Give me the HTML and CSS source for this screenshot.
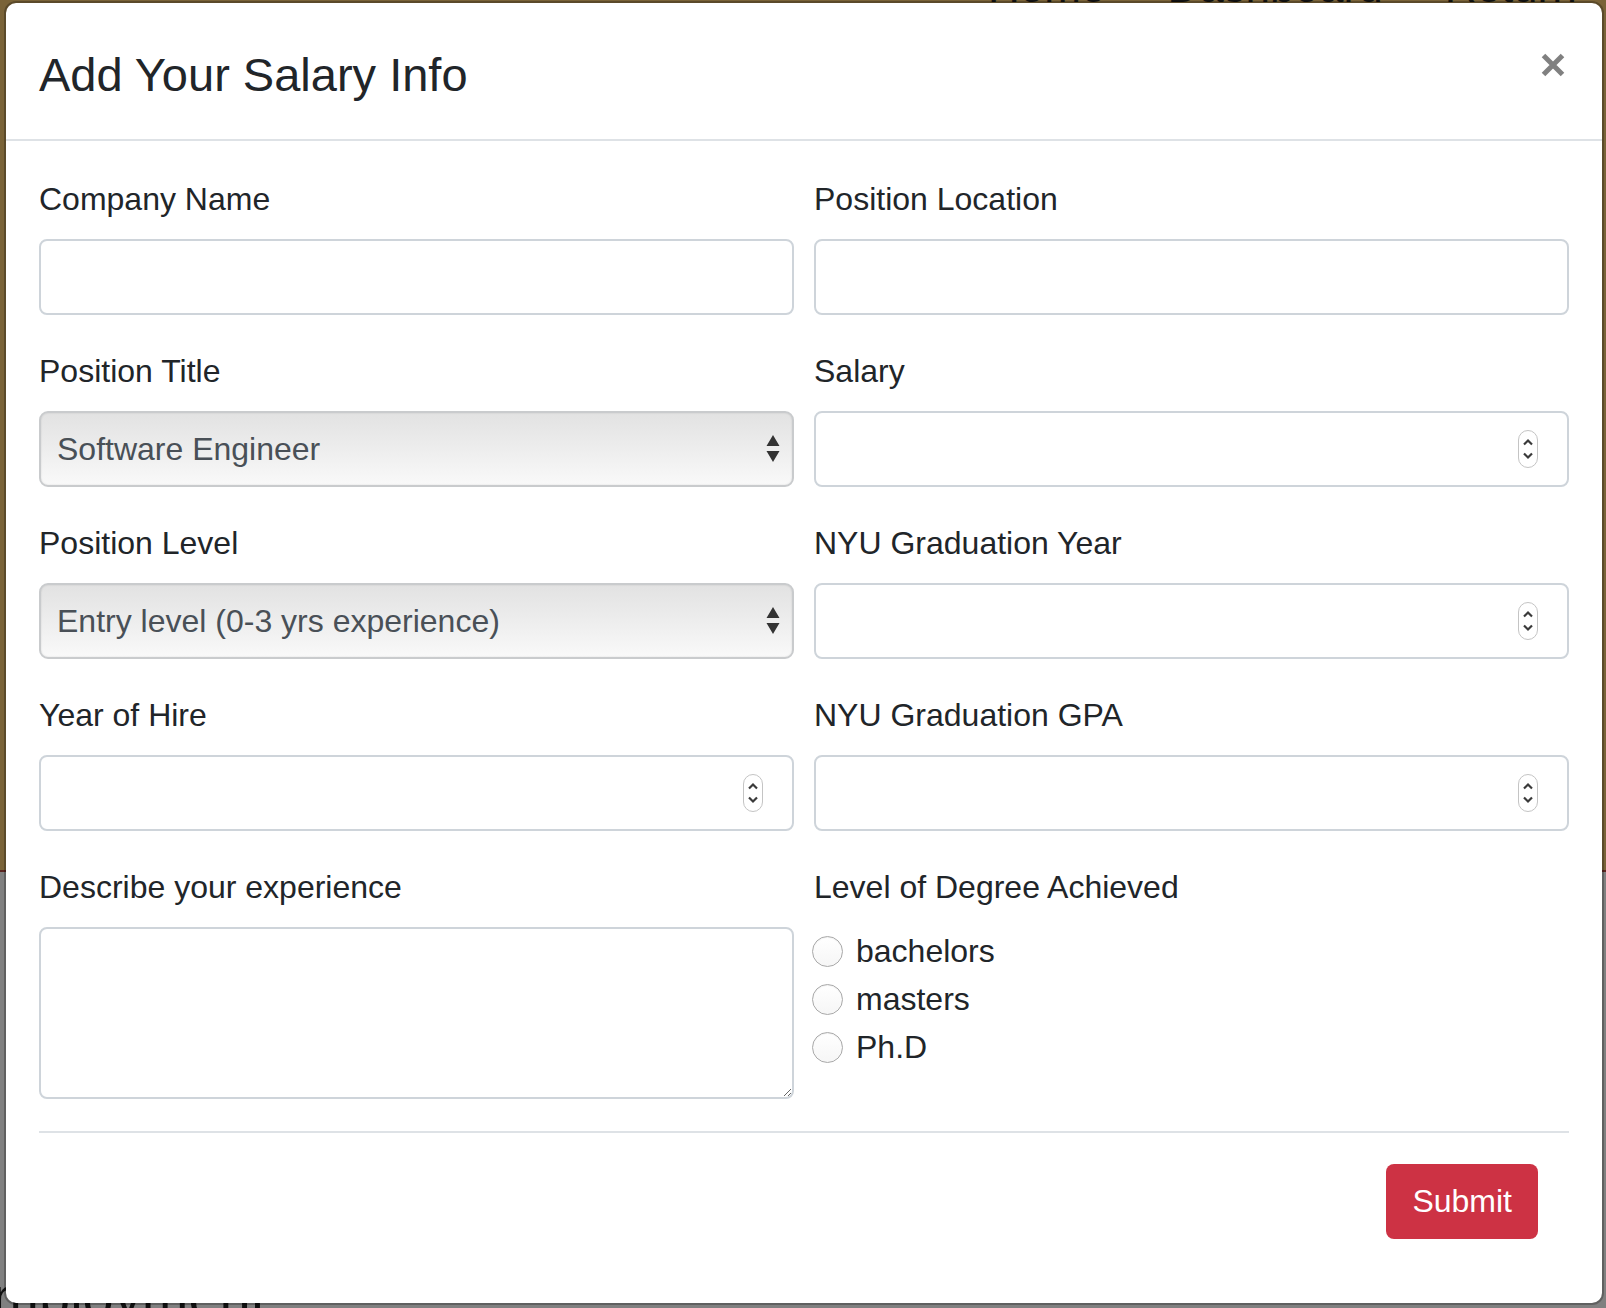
FILE: index.html
```html
<!DOCTYPE html>
<html lang="en">
<head>
<meta charset="utf-8">
<title>Add Your Salary Info</title>
<link rel="stylesheet" href="styles.css">
</head>
<body>
<div class="page">
  <div class="hero">
    <nav class="nav"><span>Home</span><span>Dashboard</span><span>Return</span></nav>
  </div>
  <div class="lower">
    <h2 class="lower-title">Employment</h2>
  </div>
</div>

<div class="modal">
  <div class="modal-header">
    <h4 class="modal-title">Add Your Salary Info</h4>
    <button class="close" type="button" aria-label="Close">
      <svg width="24" height="24" viewBox="0 0 24 24"><path d="M2.5 2.5 L21.5 21.5 M21.5 2.5 L2.5 21.5" stroke="#808080" stroke-width="5" stroke-linecap="butt" fill="none"/></svg>
    </button>
  </div>
  <div class="modal-body">
    <form class="form-grid">
      <div class="form-group">
        <label>Company Name</label>
        <input class="form-control" type="text">
      </div>
      <div class="form-group">
        <label>Position Location</label>
        <input class="form-control" type="text">
      </div>

      <div class="form-group">
        <label>Position Title</label>
        <div class="select-wrap">
          <select class="select"><option>Software Engineer</option></select>
          <svg class="select-arrows" width="14" height="30" viewBox="0 0 14 30"><path d="M7 1 L13.5 12 L0.5 12 Z M0.5 17 L13.5 17 L7 28 Z" fill="#333"/></svg>
        </div>
      </div>
      <div class="form-group">
        <label>Salary</label>
        <div class="num-wrap">
          <input class="num-input" type="text">
          <span class="spinner"><svg width="18" height="36" viewBox="0 0 18 36"><path d="M5 13.5 L9 9.5 L13 13.5 M5 22.5 L9 26.5 L13 22.5" stroke="#3a3a3a" stroke-width="2.2" fill="none"/></svg></span>
        </div>
      </div>

      <div class="form-group">
        <label>Position Level</label>
        <div class="select-wrap">
          <select class="select"><option>Entry level (0-3 yrs experience)</option></select>
          <svg class="select-arrows" width="14" height="30" viewBox="0 0 14 30"><path d="M7 1 L13.5 12 L0.5 12 Z M0.5 17 L13.5 17 L7 28 Z" fill="#333"/></svg>
        </div>
      </div>
      <div class="form-group">
        <label>NYU Graduation Year</label>
        <div class="num-wrap">
          <input class="num-input" type="text">
          <span class="spinner"><svg width="18" height="36" viewBox="0 0 18 36"><path d="M5 13.5 L9 9.5 L13 13.5 M5 22.5 L9 26.5 L13 22.5" stroke="#3a3a3a" stroke-width="2.2" fill="none"/></svg></span>
        </div>
      </div>

      <div class="form-group">
        <label>Year of Hire</label>
        <div class="num-wrap">
          <input class="num-input" type="text">
          <span class="spinner"><svg width="18" height="36" viewBox="0 0 18 36"><path d="M5 13.5 L9 9.5 L13 13.5 M5 22.5 L9 26.5 L13 22.5" stroke="#3a3a3a" stroke-width="2.2" fill="none"/></svg></span>
        </div>
      </div>
      <div class="form-group">
        <label>NYU Graduation GPA</label>
        <div class="num-wrap">
          <input class="num-input" type="text">
          <span class="spinner"><svg width="18" height="36" viewBox="0 0 18 36"><path d="M5 13.5 L9 9.5 L13 13.5 M5 22.5 L9 26.5 L13 22.5" stroke="#3a3a3a" stroke-width="2.2" fill="none"/></svg></span>
        </div>
      </div>

      <div class="form-group">
        <label>Describe your experience</label>
        <textarea class="form-control textarea" rows="3"></textarea>
      </div>
      <div class="form-group">
        <label>Level of Degree Achieved</label>
        <div class="form-check"><input class="radio" type="radio" name="deg" id="d1"><label class="check-label" for="d1">bachelors</label></div>
        <div class="form-check"><input class="radio" type="radio" name="deg" id="d2"><label class="check-label" for="d2">masters</label></div>
        <div class="form-check"><input class="radio" type="radio" name="deg" id="d3"><label class="check-label" for="d3">Ph.D</label></div>
      </div>
    </form>
    <hr class="divider">
    <div class="actions">
      <button class="btn-danger" type="button">Submit</button>
    </div>
  </div>
</div>
</body>
</html>
```
FILE: styles.css
```css
* { box-sizing: border-box; }

html, body {
  margin: 0;
  padding: 0;
}

body {
  width: 1606px;
  height: 1308px;
  overflow: hidden;
  position: relative;
  font-family: "Liberation Sans", Arial, Helvetica, sans-serif;
  color: #212529;
  background: #808080;
}

/* underlying page, dimmed by the backdrop */
.hero {
  display: flow-root;
  height: 872px;
  background: #7a6338;
  border-bottom: 2px solid #5c2621;
}

.nav {
  display: flex;
  gap: 62px;
  padding-left: 988px;
  margin-top: -33px;
  font-size: 44px;
  line-height: 40px;
  color: #111;
}

.lower {
  display: flow-root;
  background: #808080;
}

.lower-title {
  margin: 392px 0 0 -45px;
  font-size: 56px;
  font-weight: 400;
  color: #111;
  white-space: nowrap;
}

/* modal */
.modal {
  position: absolute;
  top: 1px;
  left: 4px;
  width: 1600px;
  background: #fff;
  border: 2px solid rgba(0, 0, 0, 0.25);
  border-radius: 12px;
  background-clip: padding-box;
}

.modal-header {
  display: flex;
  align-items: flex-start;
  height: 138px;
  padding: 44px 33px 0 33px;
  border-bottom: 2px solid #dee2e6;
}

.modal-title {
  margin: 0;
  font-size: 47px;
  font-weight: 400;
  line-height: 1.2;
  color: #212529;
}

.close {
  margin: 6px 4px 0 auto;
  padding: 0;
  border: 0;
  background: transparent;
  width: 24px;
  height: 24px;
  display: flex;
}

.modal-body {
  padding: 34px 33px 64px 33px;
}

.form-grid {
  display: grid;
  grid-template-columns: 1fr 1fr;
  column-gap: 20px;
  margin: 0;
}

.form-group {
  margin-bottom: 32px;
  min-width: 0;
}

.form-group > label {
  display: block;
  font-size: 32px;
  line-height: 48px;
  margin-bottom: 16px;
  color: #212529;
}

.form-control {
  display: block;
  width: 100%;
  height: 76px;
  padding: 0 24px;
  font-family: inherit;
  font-size: 32px;
  color: #495057;
  background: #fff;
  border: 2px solid #ced4da;
  border-radius: 8px;
  outline: none;
}

.textarea {
  height: 172px;
  padding: 12px 24px;
  resize: vertical;
}

/* native-looking select */
.select-wrap {
  display: flex;
  align-items: center;
  height: 76px;
  border: 2px solid #c9cbcd;
  border-radius: 9px;
  background: linear-gradient(#e2e2e2 0%, #ececec 45%, #f9f9f9 100%);
  box-shadow: inset 0 0 2px rgba(0, 0, 0, 0.12);
}

.select {
  flex: 1;
  min-width: 0;
  -webkit-appearance: none;
  appearance: none;
  height: 100%;
  padding: 0 0 0 16px;
  border: 0;
  background: transparent;
  font-family: inherit;
  font-size: 32px;
  color: #495057;
  outline: none;
}

.select-arrows {
  flex: none;
  margin-right: 12px;
}

/* number input with spinner */
.num-wrap {
  display: flex;
  align-items: center;
  height: 76px;
  border: 2px solid #ced4da;
  border-radius: 8px;
  background: #fff;
}

.num-input {
  flex: 1;
  min-width: 0;
  height: 100%;
  padding: 0 24px;
  border: 0;
  background: transparent;
  font-family: inherit;
  font-size: 32px;
  outline: none;
}

.spinner {
  flex: none;
  display: flex;
  width: 20px;
  height: 38px;
  margin-right: 29px;
  border: 1px solid #c4c4c4;
  border-radius: 10px;
  background: #fff;
  overflow: hidden;
  justify-content: center;
  align-items: center;
}

/* radios */
.form-check {
  display: flex;
  align-items: center;
  height: 48px;
}

.radio {
  -webkit-appearance: none;
  appearance: none;
  flex: none;
  width: 31px;
  height: 31px;
  margin: 0 13px 0 -2px;
  border: 1.5px solid #a9a9a9;
  border-radius: 50%;
  background: linear-gradient(#ffffff, #f6f6f6);
  box-shadow: inset 0 1px 1px rgba(0, 0, 0, 0.06);
}

.check-label {
  font-size: 32px;
  line-height: 48px;
  color: #212529;
}

.divider {
  margin: 0;
  height: 0;
  border: 0;
  border-top: 2px solid #dee2e6;
}

.actions {
  display: flex;
  justify-content: flex-end;
  padding-top: 31px;
  padding-right: 31px;
}

.btn-danger {
  height: 75px;
  padding: 0 26px;
  font-family: inherit;
  font-size: 32px;
  color: #fff;
  background: #cd3244;
  border: 0;
  border-radius: 8px;
}
```
